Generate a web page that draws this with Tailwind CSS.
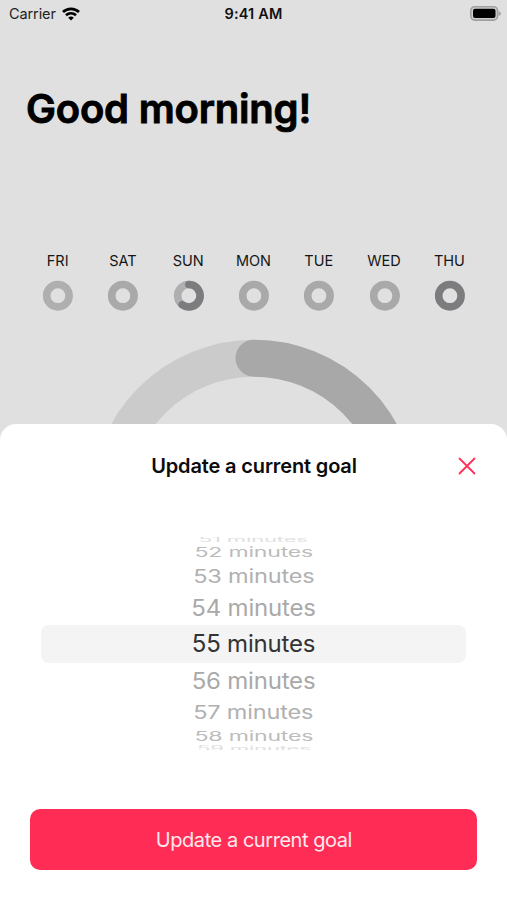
<!DOCTYPE html>
<html lang="en">
<head>
<meta charset="utf-8">
<title>Update a current goal</title>
<script src="https://cdn.jsdelivr.net/npm/@tailwindcss/browser@4"></script>
</head>
<body class="w-[507px] h-[900px] overflow-hidden bg-[#e0e0e0] font-['Inter','Liberation_Sans',sans-serif] text-black">
<div class="flex flex-col h-[900px]">
  <header class="grid grid-cols-3 items-center h-7 shrink-0 pl-[9px] pr-[6px] text-[14.5px] leading-7">
    <div class="flex items-center gap-[6px] text-[#222]">
      <span class="tracking-[-0.1px]">Carrier</span>
      <svg class="w-[18px] h-[15px]" viewBox="0 0 18 15" fill="none" stroke="#000" stroke-width="2.7">
        <path d="M1 5C5.4 .8 12.6 .8 17 5"/><path d="M4 8.2C6.8 5.6 11.2 5.6 14 8.2"/>
        <path d="M6.2 10.7Q9 8.5 11.8 10.7L9 13.6Z" fill="#000" stroke="none"/>
      </svg>
    </div>
    <div class="text-center font-semibold tracking-[0.15px] pr-[3px] text-[#111]">9:41 AM</div>
    <svg class="justify-self-end w-[31px] h-4" viewBox="0 0 31 16">
      <rect x=".8" y=".7" width="26.8" height="13.4" rx="4" fill="#cfcfcf" stroke="#a0a0a0" stroke-width="1.6"/>
      <rect x="3" y="2.8" width="22.5" height="9.3" rx="2" fill="#000"/>
      <path d="M28.7 5Q31 6 31 7.5Q31 9 28.7 10Z" fill="#a0a0a0"/>
    </svg>
  </header>
  <h1 class="h-[52px] mt-[55px] pl-[26px] shrink-0 text-[40px] leading-[52px] font-semibold tracking-[-0.2px] whitespace-nowrap [-webkit-text-stroke:0.9px_#000] [stroke-linejoin:round]">Good morning!</h1>
  <section class="grid grid-cols-7 shrink-0 mt-[115px] px-[25px] text-[14.5px] leading-[22px] text-center text-[#161616]">
    <div class="flex flex-col items-center gap-2"><span>FRI</span><svg class="size-[31px]" viewBox="0 0 31 31" fill="none" stroke-width="7.6"><circle cx="15.9" cy="15.7" r="11.2" stroke="#afafb0"/></svg></div>
    <div class="flex flex-col items-center gap-2"><span>SAT</span><svg class="size-[31px]" viewBox="0 0 31 31" fill="none" stroke-width="7.6"><circle cx="15.9" cy="15.7" r="11.2" stroke="#a9a9a9"/></svg></div>
    <div class="flex flex-col items-center gap-2"><span>SUN</span><svg class="size-[31px]" viewBox="0 0 31 31" fill="none" stroke-width="7.6"><circle cx="15.9" cy="15.7" r="11.2" stroke="#afafb1"/><path d="M15.9 4.5A11.2 11.2 0 1 1 9.2 24.7" stroke="#7c7c7e" stroke-linecap="round"/></svg></div>
    <div class="flex flex-col items-center gap-2"><span>MON</span><svg class="size-[31px]" viewBox="0 0 31 31" fill="none" stroke-width="7.6"><circle cx="15.9" cy="15.7" r="11.2" stroke="#a9a9a9"/></svg></div>
    <div class="flex flex-col items-center gap-2"><span>TUE</span><svg class="size-[31px]" viewBox="0 0 31 31" fill="none" stroke-width="7.6"><circle cx="15.9" cy="15.7" r="11.2" stroke="#a9a9a9"/></svg></div>
    <div class="flex flex-col items-center gap-2"><span>WED</span><svg class="size-[31px]" viewBox="0 0 31 31" fill="none" stroke-width="7.6"><circle cx="15.9" cy="15.7" r="11.2" stroke="#a9a9a9"/></svg></div>
    <div class="flex flex-col items-center gap-2"><span>THU</span><svg class="size-[31px]" viewBox="0 0 31 31" fill="none" stroke-width="7.6"><circle cx="15.9" cy="15.7" r="11.2" stroke="#7c7c7e"/></svg></div>
  </section>
  <!-- Daily progress ring, its lower part hidden by the sheet -->
  <svg class="block w-[507px] h-[129px] mt-[28px] shrink-0" viewBox="0 339 507 129" fill="none" stroke-width="37">
    <circle cx="254" cy="502.9" r="144.7" stroke="#cbcbcb"/>
    <path d="M254 358.2A144.7 144.7 0 0 1 254 647.6" stroke="#a8a8a8" stroke-linecap="round"/>
  </svg>
  <main class="relative flex flex-col grow mt-[-44px] rounded-t-[16px] bg-white">
    <div class="grid grid-cols-[1fr_auto_1fr] items-center h-[84px] shrink-0 pr-[30px] pl-[31px]">
      <h2 class="col-start-2 text-[20px] leading-7 font-semibold tracking-[-0.15px] text-[#0c0c0c] whitespace-nowrap">Update a current goal</h2>
      <svg class="justify-self-end size-5" viewBox="0 0 20 20" fill="none" stroke="#ff3158" stroke-width="1.8" stroke-linecap="round"><path d="M2.5 2.5L17.5 17.5M17.5 2.5L2.5 17.5"/></svg>
    </div>
    <div class="flex flex-col items-stretch shrink-0 mt-[29px] mx-[41px] h-[213px] overflow-hidden text-center text-[24px] tracking-[-0.2px] text-[#a9a9a9] whitespace-nowrap">
      <div class="flex items-center justify-center h-[5px] shrink-0 text-[#dedede]"><span class="scale-x-[.92] scale-y-[.3]">51 minutes</span></div>
      <div class="flex items-center justify-center h-[21px] shrink-0 text-[#bcbcbc]"><span class="scale-x-[.96] scale-y-[.54]">52 minutes</span></div>
      <div class="flex items-center justify-center h-[28px] shrink-0 text-[#b0b0b0]"><span class="scale-x-[.98] scale-y-[.78]">53 minutes</span></div>
      <div class="flex items-center justify-center h-[34px] shrink-0"><span class="scale-y-[.94]">54 minutes</span></div>
      <div class="flex items-center justify-center h-[38px] shrink-0 rounded-[8px] bg-[#f4f4f4] text-[#333]">55 minutes</div>
      <div class="flex items-center justify-center h-[35px] shrink-0"><span class="scale-y-[.94]">56 minutes</span></div>
      <div class="flex items-center justify-center h-[30px] shrink-0 text-[#b0b0b0]"><span class="scale-x-[.98] scale-y-[.78]">57 minutes</span></div>
      <div class="flex items-center justify-center h-[18px] shrink-0 text-[#bcbcbc]"><span class="scale-x-[.96] scale-y-[.54]">58 minutes</span></div>
      <div class="flex items-center justify-center h-[6px] shrink-0 text-[#dedede]"><span class="scale-x-[.92] scale-y-[.3]">59 minutes</span></div>
    </div>
    <button class="mt-auto mb-[29.6px] ml-[30.4px] mr-[29.6px] h-[61px] shrink-0 rounded-[10px] bg-[#ff2d55] pt-px text-[20px] tracking-[-0.45px] text-[#ffe9ee]">Update a current goal</button>
  </main>
</div>
</body>
</html>
